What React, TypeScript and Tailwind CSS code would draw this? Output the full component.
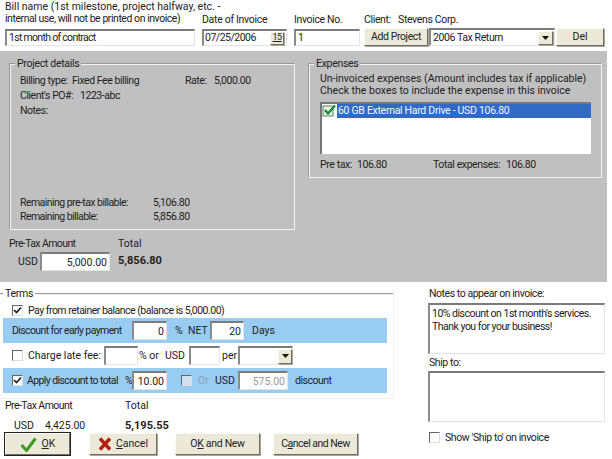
import React from "react";

const sunken =
  "border-t-2 border-l-2 border-r border-b border-t-[#7b7b7b] border-l-[#8a8a8a] border-r-[#e4e4e4] border-b-[#e4e4e4] bg-white outline-none text-[10.5px] text-[#222] h-[19px]";

const raised =
  "flex items-center justify-center bg-[#ece9d8] border border-t-[#fbfaf3] border-l-[#fbfaf3] border-r-[#716f64] border-b-[#716f64] shadow-[1px_1px_0_#aca899] text-[#222] text-[10.5px]";

function Field({ value, className, right, muted }: { value: string; className: string; right?: boolean; muted?: boolean }) {
  return (
    <input
      readOnly
      value={value}
      className={`${sunken} px-[2px] ${right ? "text-right" : ""} ${muted ? "!text-[#9a9a9a]" : ""} ${className}`}
    />
  );
}

function Arrow({ className }: { className: string }) {
  return (
    <span className={`${raised} ${className}`}>
      <svg width="7" height="4" viewBox="0 0 7 4">
        <path d="M0 0h7L3.5 4z" fill="#111" />
      </svg>
    </span>
  );
}

function Box({ checked, disabled, className }: { checked?: boolean; disabled?: boolean; className?: string }) {
  return (
    <span
      className={`flex h-[11px] w-[11px] shrink-0 items-center justify-center border-t border-l border-t-[#666] border-l-[#666] border-r border-b border-r-[#ddd] border-b-[#ddd] ${disabled ? "bg-[#cfe0ee]" : "bg-white"} ${className ?? ""}`}
    >
      {checked && (
        <svg width="9" height="9" viewBox="0 0 9 9">
          <path d="M1 4l2.5 2.5L8 1.5" fill="none" stroke="#222" strokeWidth="1.7" />
        </svg>
      )}
    </span>
  );
}

function Group({ title, className, legendClass, children }: { title: string; className: string; legendClass: string; children: React.ReactNode }) {
  return (
    <fieldset className={`border border-[#f2f2f2] shadow-[-1px_-1px_0_#9a9a9a] ${className}`}>
      <legend className={`leading-[12px] tracking-[-0.3px] text-[#222] ${legendClass}`}>{title}</legend>
      {children}
    </fieldset>
  );
}

function ProjectDetails() {
  return (
    <Group title="Project details" legendClass="ml-[4px] px-[2px] bg-[#c0c0c0]" className="h-[172px] w-[285px]">
      <div className="flex h-[159px] flex-col pl-[9px] pt-[3px] leading-[15px] tracking-[-0.45px]">
        <div className="flex">
          <span className="w-[52px]">Billing type:</span>
          <span className="w-[113px]">Fixed Fee billing</span>
          <span className="w-[29px]">Rate:</span>
          <span>5,000.00</span>
        </div>
        <div className="flex">
          <span className="w-[60px]">Client's PO#:</span>
          <span>1223-abc</span>
        </div>
        <div>Notes:</div>
        <div className="mt-auto mb-[5px] flex leading-[14px]">
          <div className="w-[133px] tracking-[-0.55px]">
            <div>Remaining pre-tax billable:</div>
            <div>Remaining billable:</div>
          </div>
          <div>
            <div>5,106.80</div>
            <div>5,856.80</div>
          </div>
        </div>
      </div>
    </Group>
  );
}

function Expenses() {
  return (
    <Group title="Expenses" legendClass="ml-[4px] px-[2px] bg-[#c0c0c0]" className="h-[120px] w-[290px]">
      <div className="px-[10px] pt-[3px]">
        <div className="leading-[12px]">Un-invoiced expenses (Amount includes tax if applicable)</div>
        <div className="leading-[12px]">Check the boxes to include the expense in this invoice</div>
        <div className="mt-[5px] h-[52px] w-[271px] border-t-2 border-l-2 border-t-[#777] border-l-[#777] bg-white">
          <div className="flex h-[13px] items-center">
            <svg width="15" height="13" viewBox="0 0 15 13" className="shrink-0">
              <rect x="1" y="2" width="10" height="10" fill="#e9f3e3" stroke="#4d8a55" />
              <path d="M3 6l3 3.5L13 1.5" fill="none" stroke="#1f8a35" strokeWidth="2.4" />
            </svg>
            <div className="flex h-[14px] flex-1 items-center bg-[#316ac5] pl-[1px] tracking-[-0.3px] text-[#f2f6ff]">
              60 GB External Hard Drive - USD 106.80
            </div>
          </div>
        </div>
        <div className="mt-[5px] flex leading-[12px] tracking-[-0.4px]">
          <span className="w-[37px]">Pre tax:</span>
          <span className="w-[76px]">106.80</span>
          <span className="w-[73px]">Total expenses:</span>
          <span>106.80</span>
        </div>
      </div>
    </Group>
  );
}

function Terms() {
  return (
    <Group title="Terms" legendClass="px-[2px] bg-white" className="h-[111px] w-[394px] border-l-0 pl-[3px] pr-[6px]">
      <div className="flex h-[18px] items-center pl-[9px] pt-[3px]">
        <Box checked />
        <span className="ml-[5px] tracking-[-0.5px]">Pay from retainer balance (balance is 5,000.00)</span>
      </div>
      <div className="flex h-[25px] items-center bg-[#99ccf3] pl-[9px]">
        <span className="w-[120px] tracking-[-0.6px]">Discount for early payment</span>
        <Field value="0" right className="w-[35px]" />
        <span className="ml-[8px] w-[13px]">%</span>
        <span className="w-[22px]">NET</span>
        <Field value="20" right className="w-[34px]" />
        <span className="ml-[8px]">Days</span>
      </div>
      <div className="flex h-[25px] items-center pl-[9px]">
        <Box />
        <span className="ml-[5px] w-[76px]">Charge late fee:</span>
        <Field value="" className="w-[34px]" />
        <span className="ml-[1px] w-[26px]">% or</span>
        <span className="w-[24px]">USD</span>
        <Field value="" className="w-[31px]" />
        <span className="ml-[2px] w-[16px]">per</span>
        <div className={`${sunken} flex w-[55px] items-center justify-end`}>
          <Arrow className="h-[15px] w-[14px]" />
        </div>
      </div>
      <div className="flex h-[25px] items-center bg-[#99ccf3] pl-[9px]">
        <Box checked />
        <span className="ml-[4px] w-[98px] tracking-[-0.6px]">Apply discount to total</span>
        <span className="w-[7px]">%</span>
        <Field value="10.00" right className="w-[35px]" />
        <Box disabled className="ml-[14px]" />
        <span className="ml-[6px] w-[17px] text-[#8aa4b8]">Or</span>
        <span className="w-[23px]">USD</span>
        <Field value="575.00" right muted className="w-[50px]" />
        <span className="ml-[7px] tracking-[-0.5px]">discount</span>
      </div>
    </Group>
  );
}

function BigButton({ children, className }: { children: React.ReactNode; className: string }) {
  return <button className={`${raised} h-[22px] ${className}`}>{children}</button>;
}

function Footer() {
  return (
    <>
      <div className="mt-px flex pl-[5px] leading-[12px]">
        <span className="w-[120px] tracking-[-0.55px]">Pre-Tax Amount</span>
        <span>Total</span>
      </div>
      <div className="mt-[8px] flex pl-[14px] leading-[12px]">
        <span className="w-[31px]">USD</span>
        <span className="w-[80px]">4,425.00</span>
        <span className="text-[11px] font-bold">5,195.55</span>
      </div>
      <div className="mt-[1px] flex pl-[5px]">
        <BigButton className="w-[65px] gap-[5px] border-[#222] outline outline-[#222]">
          <svg width="17" height="15" viewBox="0 0 17 15">
            <path d="M1.5 8l5 5.5L15.5 1.5" fill="none" stroke="#3d9a22" strokeWidth="3" />
          </svg>
          <span>
            <u>O</u>K
          </span>
        </BigButton>
        <BigButton className="ml-[19px] w-[68px] gap-[4px]">
          <svg width="14" height="14" viewBox="0 0 14 14">
            <path d="M2 1.5l10 11M12 1.5l-10 11" fill="none" stroke="#b5200f" strokeWidth="3.4" />
          </svg>
          <span>
            <u>C</u>ancel
          </span>
        </BigButton>
        <BigButton className="ml-[18px] w-[85px] tracking-[-0.3px]">
          <span>
            O<u>K</u> and New
          </span>
        </BigButton>
        <BigButton className="ml-[13px] w-[85px] tracking-[-0.5px]">
          <span>
            C<u>a</u>ncel and New
          </span>
        </BigButton>
      </div>
    </>
  );
}

export default function App() {
  return (
    <div className="h-[459px] w-[612px] overflow-hidden whitespace-nowrap bg-white font-['Roboto',sans-serif] text-[10.5px] text-[#222]">
      <div className="flex h-[51px] items-end pb-[5px] pl-[5px]">
        <div className="w-[190px]">
          <div className="leading-[12px]">Bill name (1st milestone, project halfway, etc. -</div>
          <div className="mb-[4px] leading-[12px] tracking-[-0.45px]">internal use, will not be printed on invoice)</div>
          <Field value="1st month of contract" className="!h-[17px] w-[190px] tracking-[-0.7px]" />
        </div>
        <div className="ml-[7px] w-[85px]">
          <div className="mb-[3px] leading-[12px] tracking-[-0.3px]">Date of Invoice</div>
          <div className={`${sunken} flex !h-[17px] w-[85px] items-center justify-between pl-[1px] pr-[2px] tracking-[-0.5px]`}>
            <span>07/25/2006</span>
            <span className={`${raised} h-[13px] w-[14px] !text-[9px] underline`}>15</span>
          </div>
        </div>
        <div className="ml-[7px] w-[66px]">
          <div className="mb-[3px] leading-[12px] tracking-[-0.35px]">Invoice No.</div>
          <Field value="1" className="!h-[17px] w-[66px]" />
        </div>
        <div className="ml-[4px]">
          <div className="mb-[2px] flex leading-[12px] tracking-[-0.35px]">
            <span className="w-[34px]">Client:</span>
            <span>Stevens Corp.</span>
          </div>
          <div className="flex h-[18px]">
            <button className={`${raised} w-[64px] tracking-[-0.4px]`}>Add Project</button>
            <div className={`${sunken} ml-px flex !h-[18px] w-[126px] items-center justify-between pl-[2px] pr-px tracking-[-0.4px]`}>
              <span>2006 Tax Return</span>
              <Arrow className="h-[14px] w-[15px]" />
            </div>
            <button className={`${raised} ml-px w-[48px]`}>Del</button>
          </div>
        </div>
      </div>
      <div className="flex h-[231px] w-[607px] bg-[#c0c0c0] pl-[10px] pt-[7px]">
        <div className="w-[299px]">
          <ProjectDetails />
          <div className="mt-[8px] flex leading-[12px]">
            <span className="-ml-px w-[109px] tracking-[-0.6px]">Pre-Tax Amount</span>
            <span>Total</span>
          </div>
          <div className="mt-[2px] flex items-center">
            <span className="ml-[8px] w-[22px]">USD</span>
            <Field value="5,000.00" right className="w-[70px]" />
            <span className="ml-[8px] text-[11px] font-bold">5,856.80</span>
          </div>
        </div>
        <Expenses />
      </div>
      <div className="flex">
        <div className="w-[428px] pt-[6px]">
          <Terms />
          <Footer />
        </div>
        <div className="w-[177px] pt-[6px]">
          <div className="mb-[3px] pl-px leading-[12px] tracking-[-0.45px]">Notes to appear on invoice:</div>
          <div className={`${sunken} !h-[51px] px-[2px] py-[2px] leading-[13px] tracking-[-0.5px]`}>
            <div>10% discount on 1st month's services.</div>
            <div>Thank you for your business!</div>
          </div>
          <div className="mt-[3px] mb-[2px] pl-px leading-[12px] tracking-[-0.4px]">Ship to:</div>
          <div className={`${sunken} !h-[51px]`} />
          <div className="mt-[8px] flex items-center pl-px">
            <Box />
            <span className="ml-[5px] tracking-[-0.4px]">Show 'Ship to' on invoice</span>
          </div>
        </div>
      </div>
    </div>
  );
}
